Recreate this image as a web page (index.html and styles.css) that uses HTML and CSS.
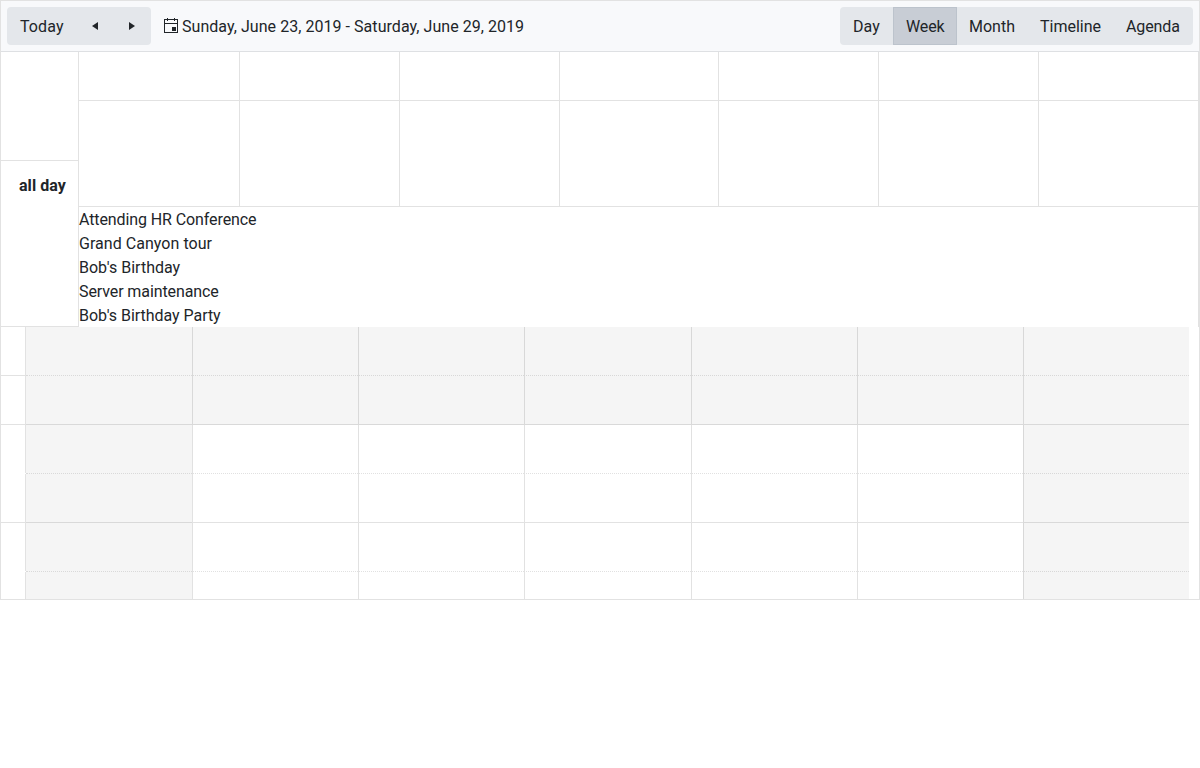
FILE: index.html
```html
<!DOCTYPE html>
<html lang="en">
<head>
<meta charset="utf-8">
<title>Scheduler</title>
<link rel="stylesheet" href="styles.css">
</head>
<body>
<div class="scheduler">
  <div class="toolbar">
    <div class="group nav">
      <button class="btn today">Today</button>
      <button class="btn icon-btn" aria-label="Previous"><svg width="16" height="16" viewBox="0 0 16 16"><path d="M11 4v8L5 8z"/></svg></button>
      <button class="btn icon-btn" aria-label="Next"><svg width="16" height="16" viewBox="0 0 16 16"><path d="M5 4v8l6-4z"/></svg></button>
    </div>
    <div class="range">
      <svg width="16" height="16" viewBox="0 0 16 16"><path fill-rule="evenodd" d="M1 1h3V0h1v1h6V0h1v1h3v14H1zM2 2v3h12V2h-2v1h-1V2H5v1H4V2zM2 6v8h12V6zM9 9h4v4H9z"/></svg>
      <span>Sunday, June 23, 2019 - Saturday, June 29, 2019</span>
    </div>
    <div class="group views">
      <button class="btn day">Day</button>
      <button class="btn week selected">Week</button>
      <button class="btn month">Month</button>
      <button class="btn timeline">Timeline</button>
      <button class="btn agenda">Agenda</button>
    </div>
  </div>
  <div class="head">
    <div class="head-times">
      <div class="corner"></div>
      <div class="all-day">all day</div>
    </div>
    <div class="head-main">
      <div class="days dates"><i></i><i></i><i></i><i></i><i></i><i></i><i></i></div>
      <div class="days slots"><i></i><i></i><i></i><i></i><i></i><i></i><i></i></div>
      <div class="events">
        <div class="tight">Attending HR Conference</div>
        <div class="loose">Grand Canyon tour</div>
        <div>Bob's Birthday</div>
        <div class="tight">Server maintenance</div>
        <div class="snug">Bob's Birthday Party</div>
      </div>
    </div>
  </div>
  <div class="content">
    <div class="row"><b class="time line"></b><div class="days half off"><i></i><i></i><i></i><i></i><i></i><i></i><i></i></div></div>
    <div class="row"><b class="time line"></b><div class="days off"><i></i><i></i><i></i><i></i><i></i><i></i><i></i></div></div>
    <div class="row"><b class="time gap"></b><div class="days half"><i></i><i></i><i></i><i></i><i></i><i></i><i></i></div></div>
    <div class="row"><b class="time line"></b><div class="days"><i></i><i></i><i></i><i></i><i></i><i></i><i></i></div></div>
    <div class="row"><b class="time gap"></b><div class="days half"><i></i><i></i><i></i><i></i><i></i><i></i><i></i></div></div>
    <div class="row"><b class="time"></b><div class="days"><i></i><i></i><i></i><i></i><i></i><i></i><i></i></div></div>
  </div>
</div>
</body>
</html>
```
FILE: styles.css
```css
* { box-sizing: border-box; }
body {
  margin: 0;
  background: #fff;
  color: #212529;
  font: 16px/24px Roboto, sans-serif;
}
.scheduler {
  --line: rgba(0, 0, 0, .115);
  display: flex;
  flex-direction: column;
  height: 600px;
  border: 1px solid #e2e2e2;
}
.toolbar {
  display: flex;
  align-items: center;
  flex: none;
  height: 51px;
  padding: 0 6px;
  background: #f8f9fb;
  border-bottom: 1px solid #dee0e3;
}
.group {
  display: flex;
  background: #e4e7eb;
  border-radius: 4px;
}
.btn {
  height: 38px;
  margin: 0 0 0 -1px;
  padding: 7px 0 5px 12px;
  border: 1px solid transparent;
  background: none;
  color: inherit;
  font: inherit;
  text-align: left;
  white-space: nowrap;
}
.btn:first-child { margin-left: 0; }
.today { width: 70px; letter-spacing: .1px; }
.day { width: 54px; letter-spacing: .1px; }
.week { width: 64px; letter-spacing: -.1px; }
.month { width: 72px; }
.timeline { width: 87px; }
.agenda { width: 80px; letter-spacing: -.1px; }
.icon-btn {
  display: flex;
  align-items: center;
  justify-content: center;
  width: 38px;
  padding: 0;
}
.selected { background: #c8cdd5; border-color: #bcc3cc; }
svg { display: block; fill: #212529; }
.range { display: flex; align-items: center; gap: 3px; margin-left: 12px; letter-spacing: .045px; }
.range span { padding-top: 2px; }
.views { margin-left: auto; }

.head { display: flex; flex: none; height: 275px; }
.head-times {
  display: flex;
  flex-direction: column;
  width: 78px;
  border-right: 1px solid #e2e2e2;
  border-bottom: 1px solid #e2e2e2;
}
.corner { height: 109px; border-bottom: 1px solid #e2e2e2; }
.all-day { padding: 13px 12px; text-align: right; font-weight: 700; letter-spacing: .08px; }
.head-main { flex: 1; border-right: 1px solid #e2e2e2; }
.days { display: grid; grid-template-columns: repeat(7, 1fr); flex: 1; }
.days i { border-left: 1px solid var(--line); border-bottom: 1px solid var(--line); }
.days i:first-child { border-left: 0; }
.dates { height: 49px; }
.slots { height: 106px; }
.events { padding-top: 1px; }
.tight { letter-spacing: -.1px; }
.snug { letter-spacing: -.04px; }
.loose { letter-spacing: .04px; }

.content { flex: 1; overflow: hidden; padding-right: 10px; }
.row { display: flex; height: 49px; }
.time { width: 25px; border-right: 1px solid #e2e2e2; }
.time.line { border-bottom: 1px solid #e2e2e2; }
.time.gap { height: 48px; }
.off i, .row i:first-child, .row i:last-child { background: #f5f5f5; }
.half i { border-bottom-style: dotted; }
```
